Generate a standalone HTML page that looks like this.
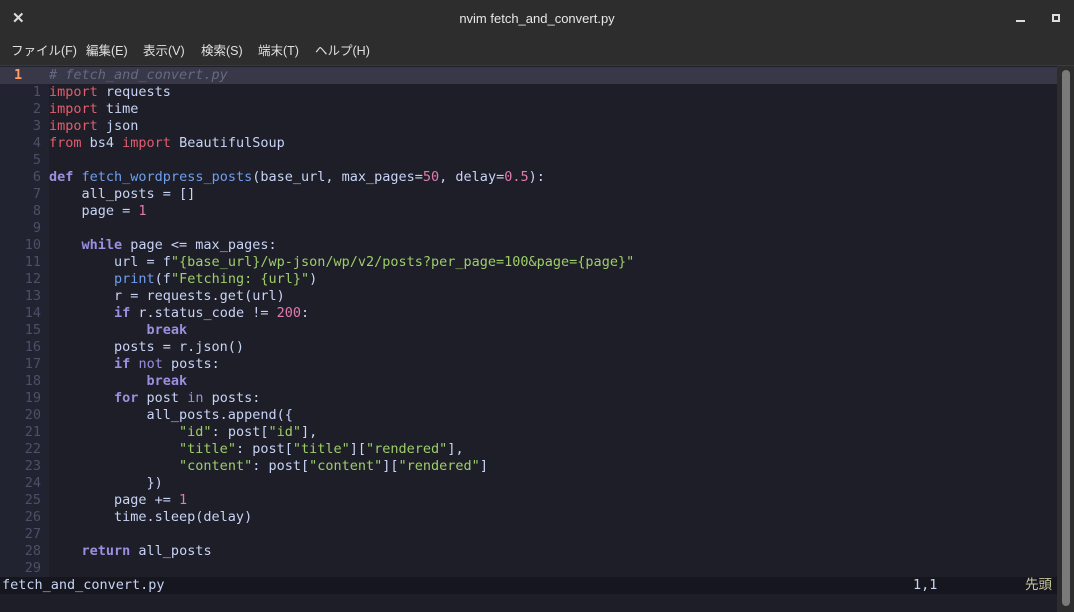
<!DOCTYPE html>
<html><head><meta charset="utf-8"><style>
*{margin:0;padding:0;box-sizing:border-box}
body{width:1074px;height:612px;background:#2d2d2d;overflow:hidden;font-family:"Liberation Sans","Noto Sans CJK JP",sans-serif;position:relative}
.title{position:absolute;top:0;left:0;width:1074px;height:38px;background:#2d2d2d;color:#e8e8e8;font-size:13px;text-align:center;line-height:38px;border-radius:10px 10px 0 0}
.x{position:absolute;left:12px;top:0;font-size:15px;font-weight:bold;color:#ddd}
.min{position:absolute;left:1016px;top:20px;width:9px;height:2px;background:#ddd}
.max{position:absolute;left:1052px;top:14px;width:8px;height:8px;border:2px solid #ddd}
.menu{position:absolute;top:38px;left:0;height:28px;width:1074px;font-size:12.5px;color:#e0e0e0;line-height:27px;border-bottom:1px solid #3a3a3a}
.menu span{position:absolute;top:0}
.ed{position:absolute;top:66px;left:0;width:1057px;height:546px;background:#1d1e27;overflow:hidden}
.gut{position:absolute;top:0;left:0;width:49px;height:511px;background:#222330}
.sb{position:absolute;left:1057px;top:66px;width:17px;height:546px;background:#2d2d2d;overflow:hidden}
.thumb{position:absolute;left:5px;top:4px;width:8px;height:536px;background:#7a7a7a;border-radius:4px}
.code{position:absolute;top:1px;left:0;font-family:"DejaVu Sans Mono","Liberation Mono","Noto Sans CJK JP",monospace;font-size:13.5px;line-height:17px;color:#c8d3f5}
.l{height:17px;position:relative;white-space:pre}
.n{display:inline-block;width:41px;text-align:right;color:#4b5068;margin-right:8px}
.cl{background:#383849;width:1057px}
.cn{color:#ff9e64;font-weight:bold;text-align:left;padding-left:14px}
.k{color:#e35d6e}.d{color:#9d8ee0;font-weight:bold}.f{color:#6f9ef0}.s{color:#9ece6a}.m{color:#e27bb0}.c{color:#666a80;font-style:italic}.w{color:#9d8ee0}
.st{position:absolute;top:511px;left:0;width:1057px;height:17px;background:#16161e;font-family:"DejaVu Sans Mono","Noto Sans CJK JP",monospace;font-size:13.5px;line-height:17px;color:#c8d3f5;white-space:pre}
</style></head><body>
<div class="title"><span class="x">✕</span>nvim fetch_and_convert.py<div class="min"></div><div class="max"></div></div>
<div class="menu"><span style="left:11px">ファイル(F)</span><span style="left:86px">編集(E)</span><span style="left:143px">表示(V)</span><span style="left:201px">検索(S)</span><span style="left:258px">端末(T)</span><span style="left:315px">ヘルプ(H)</span></div>
<div class="ed"><div class="gut"></div>
<div class="code">
<div class="l cl"><span class="n cn">1</span><span class="c"># fetch_and_convert.py</span></div>
<div class="l"><span class="n">1</span><span class="k">import</span> requests</div>
<div class="l"><span class="n">2</span><span class="k">import</span> time</div>
<div class="l"><span class="n">3</span><span class="k">import</span> json</div>
<div class="l"><span class="n">4</span><span class="k">from</span> bs4 <span class="k">import</span> BeautifulSoup</div>
<div class="l"><span class="n">5</span></div>
<div class="l"><span class="n">6</span><span class="d">def</span> <span class="f">fetch_wordpress_posts</span>(base_url, max_pages=<span class="m">50</span>, delay=<span class="m">0.5</span>):</div>
<div class="l"><span class="n">7</span>    all_posts = []</div>
<div class="l"><span class="n">8</span>    page = <span class="m">1</span></div>
<div class="l"><span class="n">9</span></div>
<div class="l"><span class="n">10</span>    <span class="d">while</span> page &lt;= max_pages:</div>
<div class="l"><span class="n">11</span>        url = f<span class="s">"{base_url}/wp-json/wp/v2/posts?per_page=100&amp;page={page}"</span></div>
<div class="l"><span class="n">12</span>        <span class="f">print</span>(f<span class="s">"Fetching: {url}"</span>)</div>
<div class="l"><span class="n">13</span>        r = requests.get(url)</div>
<div class="l"><span class="n">14</span>        <span class="d">if</span> r.status_code != <span class="m">200</span>:</div>
<div class="l"><span class="n">15</span>            <span class="d">break</span></div>
<div class="l"><span class="n">16</span>        posts = r.json()</div>
<div class="l"><span class="n">17</span>        <span class="d">if</span> <span class="w">not</span> posts:</div>
<div class="l"><span class="n">18</span>            <span class="d">break</span></div>
<div class="l"><span class="n">19</span>        <span class="d">for</span> post <span class="w">in</span> posts:</div>
<div class="l"><span class="n">20</span>            all_posts.append({</div>
<div class="l"><span class="n">21</span>                <span class="s">"id"</span>: post[<span class="s">"id"</span>],</div>
<div class="l"><span class="n">22</span>                <span class="s">"title"</span>: post[<span class="s">"title"</span>][<span class="s">"rendered"</span>],</div>
<div class="l"><span class="n">23</span>                <span class="s">"content"</span>: post[<span class="s">"content"</span>][<span class="s">"rendered"</span>]</div>
<div class="l"><span class="n">24</span>            })</div>
<div class="l"><span class="n">25</span>        page += <span class="m">1</span></div>
<div class="l"><span class="n">26</span>        time.sleep(delay)</div>
<div class="l"><span class="n">27</span></div>
<div class="l"><span class="n">28</span>    <span class="d">return</span> all_posts</div>
<div class="l"><span class="n">29</span></div>
</div>
<div class="st"><span style="position:absolute;left:2px">fetch_and_convert.py</span><span style="position:absolute;left:913px">1,1</span><span style="position:absolute;left:1025px;color:#c8c8a0">先頭</span></div>
</div>
<div class="sb"><div class="thumb"></div></div>
</body></html>
